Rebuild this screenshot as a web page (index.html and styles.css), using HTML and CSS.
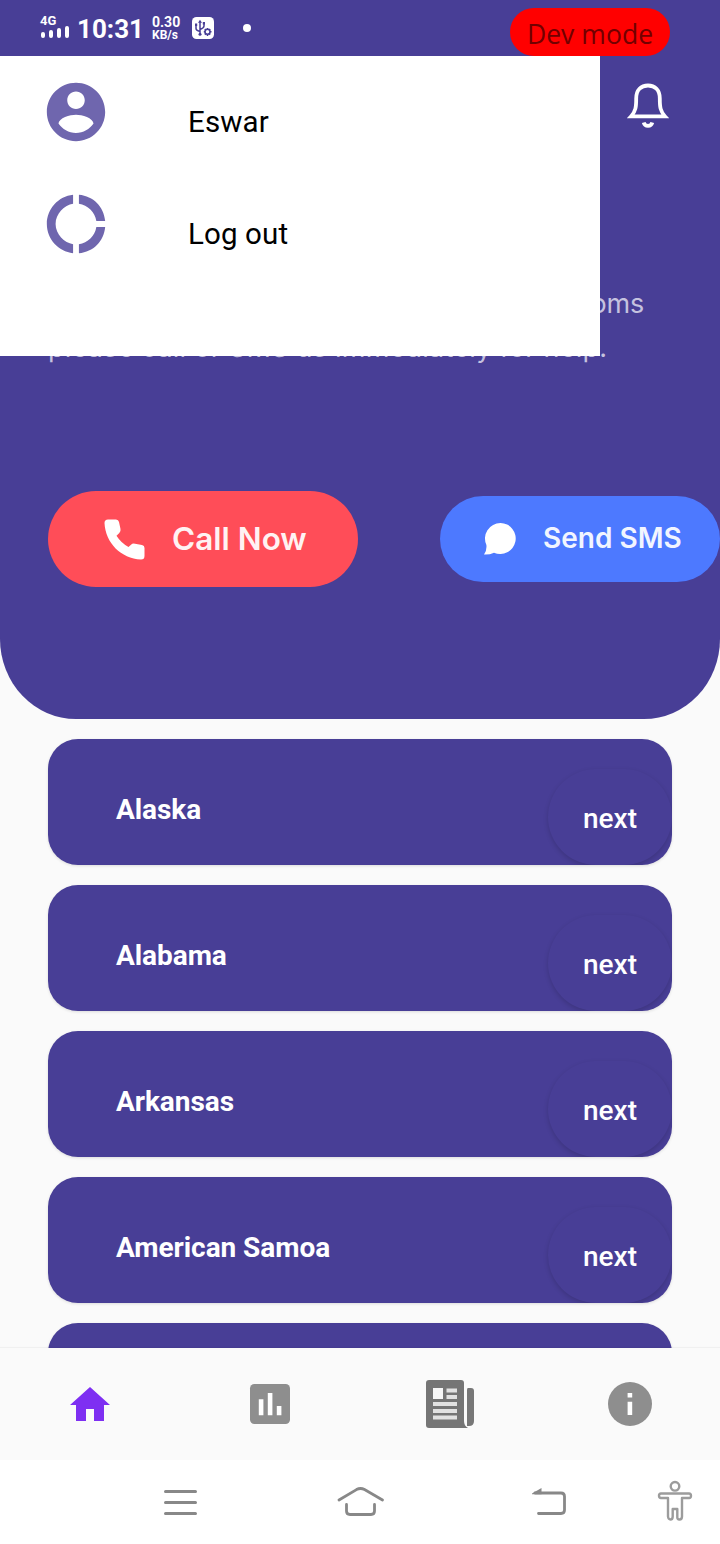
FILE: index.html
```html
<!DOCTYPE html>
<html lang="en">
<head>
<meta charset="utf-8">
<title>Home</title>
<link rel="stylesheet" href="styles.css">
</head>
<body>
<div class="phone">
  <header class="status">
    <div class="signal">
      <span class="network">4G</span>
      <svg width="29" height="14" viewBox="0 0 29 14" fill="none" stroke="#fff" stroke-width="4" stroke-linecap="round"><path d="M3 9V11M11 7V11M19 5V11M27 3V11"/></svg>
    </div>
    <span class="clock">10:31</span>
    <div class="rate"><span class="rate-value">0.30</span><span class="rate-unit">KB/s</span></div>
    <svg class="usb" width="22" height="22" viewBox="0 0 22 22"><rect width="22" height="22" rx="4.5" fill="#fff"/><g fill="none" stroke="#483e96" stroke-width="1.5"><path d="M8 4V18M4 8v3.5q0 2 4 3M12 6v3q0 2-4 3.5"/><circle cx="15.5" cy="14.8" r="2.5"/><path d="M15.5 11v1.5M15.5 17v2M11.8 14.8h1.4M18 14.8h1.5M12.8 12l1.2 1.2M17 16.4l1.2 1.2M18.2 12L17 13.2M12.8 17.6l1.2-1.2"/></g><path d="M8 2.8l2 3H6zM3 6.5h2.2v2.4H3zM10.8 5H13v2.4h-2.2z" fill="#483e96"/><circle cx="8" cy="17.3" r="1.5" fill="#483e96"/></svg>
    <i class="dot"></i>
    <span class="dev">Dev mode</span>
  </header>

  <section class="hero">
    <div class="hero-top">
      <svg width="42" height="46" viewBox="0 0 42 46" fill="none" stroke="#fff" stroke-width="3.8"><path d="M4 33.4C8.8 28 9.2 24 9.2 15.5C9.2 7 14 2.5 21 2.5S32.8 7 32.8 15.5C32.8 24 33.2 28 38 33.4Z"/><path d="M16.7 39.5Q17.6 42.8 21 42.8T25.3 39.5"/></svg>
    </div>
    <p class="lead"><span class="line first">If you feel sick with any of covid-19 symptoms</span><span class="line second">please call or SMS us immediately for help.</span></p>
    <div class="actions">
      <div class="action call">
        <svg width="41" height="41" viewBox="0 0 41 41" fill="#fff"><path d="M4 .5H12Q14.5 .5 15 3L16.5 10Q17 12.5 15.3 14L12.5 16.8Q17 24 24.5 28L27 25.7Q28.5 24.2 31 24.7L38 26Q40.5 26.6 40.5 29V37Q40.5 40.5 37 40.5C17 39.5 1.5 24 .5 4Q.5 .5 4 .5Z"/></svg>
        <span>Call Now</span>
      </div>
      <div class="action sms">
        <svg width="33" height="33" viewBox="0 0 33 33" fill="#fff"><path d="M16.5 0A15.5 15.5 0 1 1 10 29.7Q5.5 31.8 0 31.5Q3 27.5 2.4 22A15.5 15.5 0 0 1 16.5 0Z"/></svg>
        <span>Send SMS</span>
      </div>
    </div>
  </section>

  <main class="states">
    <article class="state"><span class="name">Alaska</span><span class="next">next</span></article>
    <article class="state"><span class="name">Alabama</span><span class="next">next</span></article>
    <article class="state"><span class="name">Arkansas</span><span class="next">next</span></article>
    <article class="state"><span class="name">American Samoa</span><span class="next">next</span></article>
    <article class="state"></article>
  </main>

  <nav class="tabs">
    <div class="tab"><svg width="48" height="48" viewBox="0 0 24 24" fill="#7e2ff2"><path d="M10 20.5v-6h4v6h5v-8h3L12 3.5 2 12.5h3v8z"/></svg></div>
    <div class="tab"><svg width="48" height="48" viewBox="0 0 24 24"><rect x="2" y="2" width="20" height="20" rx="2.2" fill="#8e8e8e"/><path fill="#fff" d="M6.4 9.6h2.3v8H6.4zM10.9 6.5h2.3v11.1h-2.3zM15.4 13h2.3v4.6h-2.3z"/></svg></div>
    <div class="tab"><svg width="48" height="48" viewBox="0 0 48 48"><rect width="38" height="48" rx="3" fill="#757575"/><path d="M42 8h3q3 0 3 3v30q0 5-5 5h-2V10q0-2 1-2z" fill="#777"/><path d="M34 41h4q0 5 4 7h-8z" fill="#757575"/><path d="M7 8h10v11H7z" fill="#f6f6f6"/><path d="M20.5 10.5H31M20.5 17H31M7 24h24M7 31h24M7 37.5h24" stroke="#e1e1e1" stroke-width="4"/></svg></div>
    <div class="tab"><svg width="48" height="48" viewBox="0 0 24 24"><circle cx="12" cy="12" r="11" fill="#8e8e8e"/><path fill="#fff" d="M10.8 6.5h2.3v2.2h-2.3zM10.8 10.9h2.3v6.6h-2.3z"/></svg></div>
  </nav>

  <footer class="system">
    <svg class="sys-menu" width="34" height="28" viewBox="0 0 34 28" stroke="#888" stroke-width="3" stroke-linecap="round"><path d="M2.5 3.5H32.5M2.5 14.5H32.5M2.5 25.5H32.5"/></svg>
    <svg class="sys-home" width="48" height="32" viewBox="0 0 48 32" fill="none" stroke="#888" stroke-width="2.8" stroke-linecap="round" stroke-linejoin="round"><path d="M2 15L19.5 4.6Q23.5 2.4 27.500 4.600L45.500 15M9.500 19.500V26Q9.500 29.500 13 29.500H34Q37.500 29.500 37.500 26V19.500"/></svg>
    <svg class="sys-back" width="36" height="30" viewBox="0 0 36 30" fill="none" stroke="#888" stroke-width="2.8" stroke-linecap="round"><path d="M4 6H30Q33.5 6 33.5 9.5V23Q33.5 26.5 30 26.5H7.5"/><path d="M1 6.5L10.5 1V7.2H1Z" fill="#888" stroke="none"/></svg>
    <svg class="sys-access" width="36" height="42" viewBox="0 0 36 42" fill="none" stroke="#9c9c9c" stroke-width="2.4" stroke-linejoin="round"><circle cx="18" cy="6.3" r="4.3"/><path d="M4 13.5H32Q34 13.5 34 15.8T32 18H25V36.5Q25 39.5 22.5 39.5T20.3 36.5V29H15.7V36.5Q15.7 39.5 13.5 39.5T11 36.5V18H4Q2 18 2 15.8T4 13.5Z"/></svg>
  </footer>

  <aside class="drawer">
    <div class="item"><svg width="70" height="70" viewBox="0 0 24 24" fill="#6f66ae"><path d="M12 2C6.480 2 2 6.480 2 12s4.480 10 10 10 10-4.480 10-10S17.520 2 12 2zm0 3c1.660 0 3 1.340 3 3s-1.340 3-3 3-3-1.340-3-3 1.340-3 3-3zm0 14.200c-2.500 0-4.710-1.280-6-3.220.030-1.990 4-3.080 6-3.080 1.990 0 5.970 1.090 6 3.080-1.290 1.940-3.500 3.220-6 3.220z"/></svg><span>Eswar</span></div>
    <div class="item"><svg width="70" height="70" viewBox="0 0 24 24" fill="#6f66ae"><path d="M11 5.080V2C6 2.500 2 6.810 2 12s4 9.500 9 10v-3.080c-3-.480-6-3.400-6-6.920s3-6.440 6-6.920zM18.970 11H22c-.470-5-4-8.530-9-9v3.080C16 5.510 18.540 8 18.970 11zM13 18.920V22c5-.470 8.530-4 9-9h-3.030c-.430 3-2.970 5.490-5.970 5.920z"/></svg><span>Log out</span></div>
  </aside>
</div>
</body>
</html>
```
FILE: styles.css
```css
* { box-sizing: border-box; }
body { margin: 0; font-family: Roboto, sans-serif; }
svg { display: block; flex: none; }
.phone { position: relative; display: flex; flex-direction: column; width: 720px; height: 1544px; overflow: hidden; background: #fafafa; }

.status { position: relative; flex: none; height: 56px; padding-left: 40px; display: flex; align-items: flex-start; background: #483e96; color: #fff; overflow: hidden; }
.signal { width: 37px; padding-top: 14px; }
.network { display: block; height: 11px; font-size: 13px; line-height: 13px; font-weight: 700; }
.clock { width: 75px; padding-top: 14px; font-size: 26px; line-height: 30px; font-weight: 700; white-space: nowrap; }
.rate { width: 40px; padding-top: 16px; font-weight: 700; }
.rate span { display: block; line-height: 13px; white-space: nowrap; }
.rate-value { font-size: 14px; }
.rate-unit { font-size: 12px; }
.usb { margin-top: 17px; }
.dot { width: 8px; height: 8px; margin: 24px 0 0 29px; border-radius: 50%; background: #fff; }
.dev { position: absolute; left: 510px; top: 8px; width: 160px; height: 48px; border-radius: 24px; background: #f00; color: #720000; text-align: center; white-space: nowrap; font: 26.5px/52px "Open Sans", sans-serif; letter-spacing: .05px; }

.hero { flex: none; height: 663px; display: flex; flex-direction: column; background: #483e96; border-radius: 0 0 76px 76px / 0 0 80px 80px; }
.hero-top { height: 225px; display: flex; justify-content: flex-end; padding: 27px 51px 0 0; }
.lead { height: 210px; margin: 0; padding-left: 48px; color: #c5c2df; font: 27px/50px Inter, sans-serif; }
.line { display: block; white-space: nowrap; }
.first { width: 596px; height: 43px; line-height: 46px; text-align: right; letter-spacing: -.2px; }
.second { letter-spacing: .24px; line-height: 48px; }
.actions { display: flex; align-items: center; justify-content: space-between; padding-left: 48px; }
.action { display: flex; align-items: center; color: #fff; font-family: Inter, sans-serif; font-weight: 600; white-space: nowrap; }
.call { width: 310px; height: 96px; border-radius: 48px; padding-left: 56px; gap: 27px; background: #ff4d58; font-size: 31.5px; }
.sms { width: 280px; height: 86px; border-radius: 43px; padding-left: 44px; gap: 26px; background: #4d79ff; font-size: 28px; }
.action span { position: relative; top: -1px; opacity: .93; }

.states { flex: 1; min-height: 0; overflow: hidden; padding: 20px 48px 0; display: flex; flex-direction: column; gap: 20px; }
.state { flex: none; display: flex; justify-content: space-between; align-items: flex-end; height: 126px; padding-left: 68px; border-radius: 30px; background: #483e96; box-shadow: 0 1px 3px rgba(0,0,0,.12); color: #fff; overflow: hidden; }
.name { font-size: 28px; font-weight: 700; line-height: 32px; margin-bottom: 39px; letter-spacing: -.06px; }
.next { width: 124px; height: 96px; border-radius: 48px; text-align: center; font-size: 28px; line-height: 100px; font-weight: 500; box-shadow: 0 2px 5px rgba(0,0,0,.16); }

.tabs { flex: none; height: 112px; display: grid; grid-template-columns: repeat(4, 1fr); align-items: center; background: #fafafa; box-shadow: 0 -1px 1px rgba(0,0,0,.04); }
.tab { display: flex; justify-content: center; }
.system { flex: none; height: 84px; padding-left: 163px; display: flex; align-items: flex-start; background: #fff; }
.sys-menu { margin-top: 28px; }
.sys-home { margin: 25px 0 0 140px; }
.sys-back { margin: 27px 0 0 146px; }
.sys-access { margin: 20px 0 0 90px; }

.drawer { position: absolute; left: 0; top: 56px; width: 600px; height: 300px; background: #fff; }
.item { height: 112px; padding: 21px 0 0 41px; display: flex; gap: 77px; }
.item span { padding-top: 28px; font-size: 29.5px; line-height: 34px; letter-spacing: .12px; color: #000; }
```
